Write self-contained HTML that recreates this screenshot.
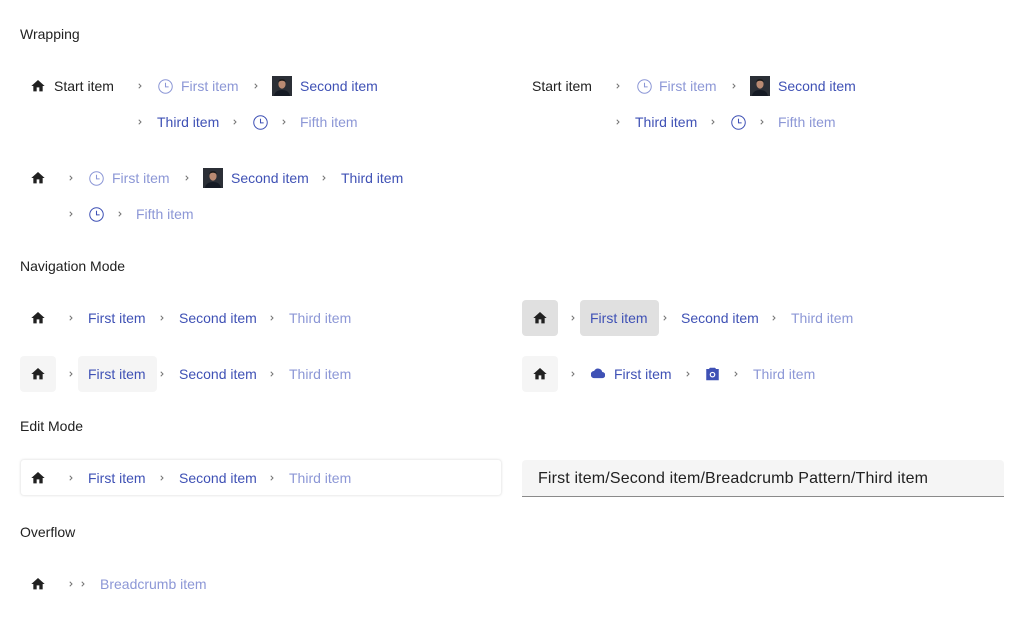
<!DOCTYPE html>
<html><head><meta charset="utf-8"><style>
body{margin:0;width:1024px;height:622px;background:#fff;font-family:"Liberation Sans",Roboto,sans-serif;font-size:14px;position:relative;overflow:hidden}
.a{position:absolute;line-height:18px;white-space:nowrap}
.h{color:#212121}
.b{color:#3f51b5}
.l{color:#8c97d6}
.box{position:absolute;border-radius:4px}
svg{position:absolute}
</style></head><body>
<svg width="0" height="0" style="position:absolute"><defs>
<symbol id="home" viewBox="0 0 24 24"><path d="M10 20v-6h4v6h5v-8h3L12 3 2 12h3v8z" fill="#212121"/></symbol>
<symbol id="clk" viewBox="0 0 24 24"><circle cx="12" cy="12" r="10.8" fill="none" stroke="currentColor" stroke-width="1.6"/><path d="M12 6V12.6H17" fill="none" stroke="currentColor" stroke-width="1.7"/></symbol>
<symbol id="chev" viewBox="0 0 24 24"><path d="M9.5 7.5l4.5 4.5-4.5 4.5" fill="none" stroke="#757575" stroke-width="2"/></symbol>
<symbol id="av" viewBox="0 0 20 20"><rect width="20" height="20" fill="#2b2f36"/><ellipse cx="10" cy="8" rx="3.6" ry="4.6" fill="#b98a72"/><path d="M6.3 6.5Q6.5 2.8 10 3 13.5 2.8 13.7 6.5 12 4.5 10 4.8 8 4.5 6.3 6.5z" fill="#1b1b1b"/><path d="M2 20Q3 14 10 14 17 14 18 20z" fill="#151a24"/></symbol>
</defs></svg>
<div class="a h" style="left:20px;top:25px">Wrapping</div>
<div class="a h" style="left:20px;top:257px">Navigation Mode</div>
<div class="a h" style="left:20px;top:417px">Edit Mode</div>
<div class="a h" style="left:20px;top:523px">Overflow</div>

<div class="box" style="left:522px;top:300px;width:36px;height:36px;background:#e0e0e0"></div>
<div class="box" style="left:580px;top:300px;width:79px;height:36px;background:#e0e0e0"></div>
<div class="box" style="left:20px;top:356px;width:36px;height:36px;background:#f5f5f5"></div>
<div class="box" style="left:78px;top:356px;width:79px;height:36px;background:#f5f5f5"></div>
<div class="box" style="left:522px;top:356px;width:36px;height:36px;background:#f5f5f5"></div>
<div class="box" style="left:20px;top:459px;width:482px;height:37px;border:1px solid #f0f0f0;box-shadow:0 0 2px rgba(0,0,0,.08);box-sizing:border-box"></div>
<div style="position:absolute;left:522px;top:460px;width:482px;height:37px;background:#f5f5f5;border-bottom:1px solid #8a8a8a;box-sizing:border-box;border-radius:4px 4px 0 0"></div>
<div class="a h" style="left:538px;top:469px;font-size:16px;line-height:20px;letter-spacing:0.15px">First item/Second item/Breadcrumb Pattern/Third item</div>

<div id="c"></div>
<script>
const H=[[38,86],[38,178],[38,318],[540,318],[38,374],[540,374],[38,478],[38,584]];
const C=[[140,86],[256,86],[140,122],[235,122],[284,122],[618,86],[734,86],[618,122],[713,122],[762,122],[71,178],[187,178],[324,178],[71,214],[120,214],
[71,318],[162,318],[272,318],[573,318],[665,318],[774,318],[71,374],[162,374],[272,374],[573,374],[688,374],[736,374],[71,478],[162,478],[272,478],[71,584],[83,584]];
const K=[[165,86,'#8c97d6'],[260,122,'#3f51b5'],[644,86,'#8c97d6'],[738,122,'#3f51b5'],[96,178,'#8c97d6'],[96,214,'#3f51b5']];
const A=[[272,76],[750,76],[203,168]];
const T=[[54,86,'h','Start item'],[181,86,'l','First item'],[300,86,'b','Second item'],[157,122,'b','Third item'],[300,122,'l','Fifth item'],
[532,86,'h','Start item'],[659,86,'l','First item'],[778,86,'b','Second item'],[635,122,'b','Third item'],[778,122,'l','Fifth item'],
[112,178,'l','First item'],[231,178,'b','Second item'],[341,178,'b','Third item'],[136,214,'l','Fifth item'],
[88,318,'b','First item'],[179,318,'b','Second item'],[289,318,'l','Third item'],
[590,318,'b','First item'],[681,318,'b','Second item'],[791,318,'l','Third item'],
[88,374,'b','First item'],[179,374,'b','Second item'],[289,374,'l','Third item'],
[614,374,'b','First item'],[753,374,'l','Third item'],
[88,478,'b','First item'],[179,478,'b','Second item'],[289,478,'l','Third item'],[100,584,'l','Breadcrumb item']];
let s='';
H.forEach(([x,y])=>s+=`<svg style="left:${x-8}px;top:${y-8}px" width="16" height="16"><use href="#home"/></svg>`);
C.forEach(([x,y])=>s+=`<svg style="left:${x-6}px;top:${y-6}px" width="12" height="12"><use href="#chev"/></svg>`);
K.forEach(([x,y,c])=>s+=`<svg style="left:${x-7}px;top:${y-7}px;color:${c}" width="15" height="15"><use href="#clk"/></svg>`);
A.forEach(([x,y])=>s+=`<svg style="left:${x}px;top:${y}px" width="20" height="20"><use href="#av"/></svg>`);
T.forEach(([x,y,c,t])=>s+=`<div class="a ${c}" style="left:${x}px;top:${y-9}px">${t}</div>`);
s+=`<svg style="left:591px;top:368px" width="14" height="11" viewBox="0 0 24 18"><path d="M19.4 6.5A7.5 7.5 0 0 0 5.4 4.5 6 6 0 0 0 6 17h13a5 5 0 0 0 .4-10.5z" fill="#3f51b5"/></svg>`;
s+=`<svg style="left:705px;top:367px" width="15" height="14" viewBox="0 0 24 22"><path d="M8 1L6.2 3H2v18h20V3h-4.2L16 1z" fill="#3f51b5"/><circle cx="12" cy="12" r="4.5" fill="#fff"/><circle cx="12" cy="12" r="2.6" fill="#3f51b5"/></svg>`;
document.getElementById('c').innerHTML=s;
</script>
</body></html>
